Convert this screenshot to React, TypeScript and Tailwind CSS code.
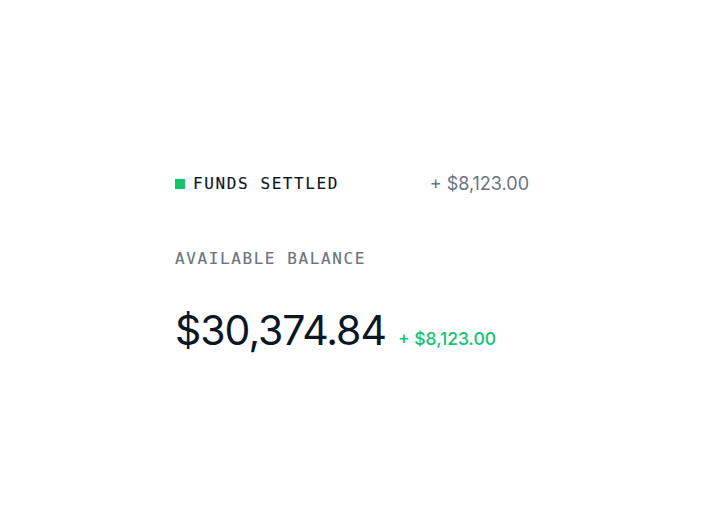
import React from "react";

const App = () => {
  return (
    <div className="min-h-screen bg-white flex items-center justify-center pb-[5px] font-['Inter',sans-serif]">
      <div className="w-[354px] flex flex-col">
        <div className="flex items-center justify-between">
          <div className="flex items-center gap-2">
            <span className="w-[10px] h-[10px] bg-[#0ec46f]" />
            <span className="font-['DejaVu_Sans_Mono',monospace] text-base tracking-[0.1em] text-[#0b1524] [-webkit-text-stroke:0.15px_#0b1524]">
              FUNDS SETTLED
            </span>
          </div>
          <span className="text-[18px] text-[#6b7280]">+ $8,123.00</span>
        </div>

        <div className="mt-[50px] font-['DejaVu_Sans_Mono',monospace] text-base tracking-[0.1em] text-[#6b7280] [-webkit-text-stroke:0.15px_#6b7280]">
          AVAILABLE BALANCE
        </div>

        <div className="mt-[39px] flex items-baseline gap-3">
          <span className="text-[41px] leading-none text-[#0b1726] tracking-tight">$30,374.84</span>
          <span className="text-[17.5px] font-medium text-[#12c46f]">+ $8,123.00</span>
        </div>
      </div>
    </div>
  );
};

export default App;
